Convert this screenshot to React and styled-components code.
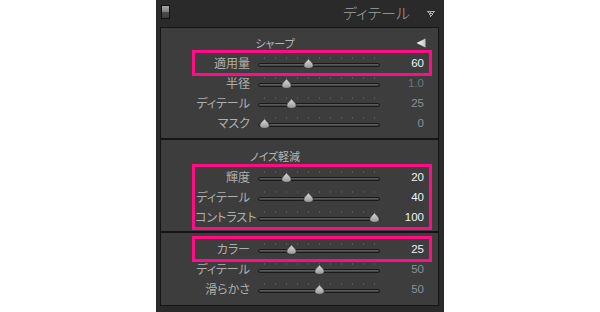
import React from 'react'
import styled, { createGlobalStyle } from 'styled-components'

const GlobalStyle = createGlobalStyle`
  html, body {
    margin: 0;
    background: #fff;
  }
  body {
    font-family: "Noto Sans CJK JP", "Noto Sans", sans-serif;
  }
`

const Page = styled.div`
  display: flex;
  justify-content: center;
`

const Panel = styled.div`
  width: 288px;
  height: 312px;
  box-sizing: border-box;
  background: #2a2a2a;
  padding: 0 5px 6px 4px;
  display: flex;
  flex-direction: column;
`

const Header = styled.div`
  height: 27px;
  flex: none;
  display: flex;
  align-items: flex-start;
`

const Toggle = styled.div`
  width: 9px;
  height: 14px;
  margin: 5px 0 0 1px;
  box-sizing: border-box;
  border: 1px solid #121212;
  background: linear-gradient(#a8a8a8, #7c7c7c 50%, #4c4c4c 50%, #3c3c3c);
`

const Title = styled.div`
  margin-left: auto;
  font-size: 15px;
  font-weight: 300;
  line-height: 26px;
  color: #a0a0a0;
  font-feature-settings: "palt";
`

const Collapse = styled.svg`
  margin: 11px 4px 0 17px;
`

const Inner = styled.div`
  flex: 1;
  border: 1px solid #141414;
  background: #3d3d3d;
  display: flex;
  flex-direction: column;
`

const Section = styled.div`
  padding: ${p => p.$pad};
  border-top: ${p => (p.$first ? 'none' : '2px solid #151515')};
`

const SectionTitle = styled.div`
  display: grid;
  grid-template-columns: 228px 1fr;
  align-items: center;
  height: ${p => p.$h}px;
  font-size: 11px;
  color: #b6b6b6;
  font-feature-settings: "palt";

  span {
    text-align: center;
  }
  svg {
    justify-self: end;
    margin-right: 12px;
  }
`

const Group = styled.div`
  margin: 0 9px 0 34px;
  outline: ${p => (p.$hl ? '3px solid #ff0d85' : 'none')};
`

const Row = styled.div`
  display: grid;
  grid-template-columns: 55px 122px 36px;
  column-gap: 8px;
  height: 20px;
  align-items: center;
`

const Label = styled.div`
  text-align: right;
  font-size: 12px;
  line-height: 20px;
  color: #afafaf;
  white-space: nowrap;
  font-feature-settings: "palt";
`

const Slider = styled.div`
  position: relative;
  height: 20px;
`

const Ticks = styled.div`
  position: absolute;
  left: 6px;
  top: 4px;
  width: 111px;
  height: 2px;
  background: repeating-linear-gradient(90deg, #575757 0 1px, transparent 1px 11px);
`

const Track = styled.div`
  position: absolute;
  left: 0;
  right: 0;
  top: 10px;
  height: 4px;
  box-sizing: border-box;
  border: 1px solid #1a1a1a;
  border-radius: 2px;
  background: linear-gradient(#646464, #3c3c3c);
`

const Thumb = styled.svg`
  position: absolute;
  top: 5px;
`

const Value = styled.div`
  text-align: right;
  font-family: "Liberation Sans", Arial, sans-serif;
  font-size: 11.5px;
  line-height: 20px;
  color: ${p => p.$color};
`

const sections = [
  {
    title: 'シャープ',
    titleH: 20,
    arrow: true,
    pad: '5px 0 5px',
    groups: [
      { hl: true, rows: [{ label: '適用量', value: '60', pos: 0.4, color: '#eef3fb' }] },
      {
        rows: [
          { label: '半径', value: '1.0', pos: 0.2, color: '#6f747c' },
          { label: 'ディテール', value: '25', pos: 0.25, color: '#8a909a' },
          { label: 'マスク', value: '0', pos: 0, color: '#8a909a' },
        ],
      },
    ],
  },
  {
    title: 'ノイズ軽減',
    titleH: 22,
    pad: '5px 0 4px',
    groups: [
      {
        hl: true,
        rows: [
          { label: '輝度', value: '20', pos: 0.2, color: '#eef3fb' },
          { label: 'ディテール', value: '40', pos: 0.4, color: '#eef3fb' },
          { label: 'コントラスト', value: '100', pos: 1, color: '#eef3fb' },
        ],
      },
    ],
  },
  {
    pad: '6px 0 6px',
    groups: [
      { hl: true, rows: [{ label: 'カラー', value: '25', pos: 0.25, color: '#eef3fb' }] },
      {
        rows: [
          { label: 'ディテール', value: '50', pos: 0.5, color: '#8a909a' },
          { label: '滑らかさ', value: '50', pos: 0.5, color: '#8a909a' },
        ],
      },
    ],
  },
]

function ThumbIcon({ left }) {
  return (
    <Thumb width="11" height="11" viewBox="0 0 11 11" style={{ left }}>
      <defs>
        <linearGradient id="tg" x1="0" y1="0" x2="0" y2="1">
          <stop offset="0" stopColor="#dedede" />
          <stop offset="1" stopColor="#959595" />
        </linearGradient>
      </defs>
      <path
        d="M5.5 0.6 C6.6 2.8 10.2 4.6 10.3 7.4 C10.4 9.4 8.3 10.4 5.5 10.4 C2.7 10.4 0.6 9.4 0.7 7.4 C0.8 4.6 4.4 2.8 5.5 0.6 Z"
        fill="url(#tg)"
        stroke="#2a2a2a"
        strokeWidth="0.8"
      />
    </Thumb>
  )
}

function SliderRow({ label, value, pos, color }) {
  return (
    <Row>
      <Label>{label}</Label>
      <Slider>
        <Ticks />
        <Track />
        <ThumbIcon left={`${0.5 + pos * 110}px`} />
      </Slider>
      <Value $color={color}>{value}</Value>
    </Row>
  )
}

export default function App() {
  return (
    <Page>
      <GlobalStyle />
      <Panel>
        <Header>
          <Toggle />
          <Title>ディテール</Title>
          <Collapse width="8" height="6" viewBox="0 0 8 6">
            <rect x="0" y="0" width="8" height="1" fill="#b0b0b0" />
            <rect x="1" y="1" width="1" height="1" fill="#b0b0b0" />
            <rect x="3" y="1" width="1" height="1" fill="#b0b0b0" />
            <rect x="6" y="1" width="1" height="1" fill="#b0b0b0" />
            <rect x="2" y="2" width="4" height="1" fill="#b0b0b0" />
            <rect x="2" y="3" width="1" height="1" fill="#b0b0b0" />
            <rect x="5" y="3" width="1" height="1" fill="#b0b0b0" />
            <rect x="3" y="4" width="2" height="1" fill="#b0b0b0" />
            <rect x="3" y="5" width="1" height="1" fill="#b0b0b0" />
          </Collapse>
        </Header>
        <Inner>
          {sections.map((s, i) => (
            <Section key={i} $first={i === 0} $pad={s.pad}>
              {s.title && (
                <SectionTitle $h={s.titleH}>
                  <span>{s.title}</span>
                  {s.arrow && (
                    <svg width="10" height="10" viewBox="0 0 10 10">
                      <defs>
                        <linearGradient id="ag" x1="0" y1="0" x2="1" y2="0">
                          <stop offset="0" stopColor="#ffffff" />
                          <stop offset="1" stopColor="#c4c4c4" />
                        </linearGradient>
                      </defs>
                      <polygon points="0.5,5 9.5,0.5 9.5,9.5" fill="url(#ag)" />
                    </svg>
                  )}
                </SectionTitle>
              )}
              {s.groups.map((g, j) => (
                <Group key={j} $hl={g.hl}>
                  {g.rows.map(r => (
                    <SliderRow key={r.label} {...r} />
                  ))}
                </Group>
              ))}
            </Section>
          ))}
        </Inner>
      </Panel>
    </Page>
  )
}
